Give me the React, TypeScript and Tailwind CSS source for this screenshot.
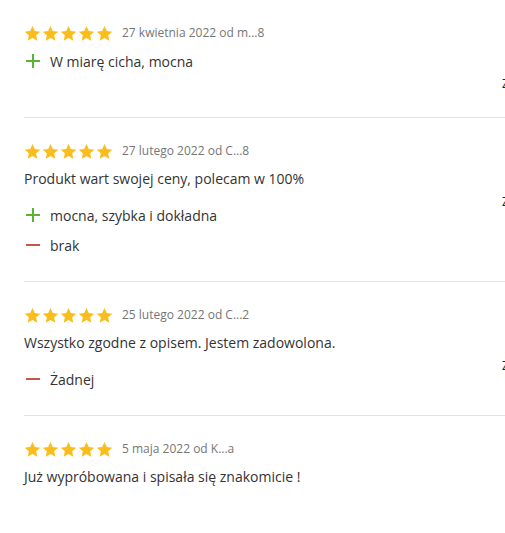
import React from "react";

type Review = {
  date: string;
  text?: string;
  pros?: string;
  cons?: string;
};

const reviews: Review[] = [
  { date: "27 kwietnia 2022 od m...8", pros: "W miarę cicha, mocna" },
  {
    date: "27 lutego 2022 od C...8",
    text: "Produkt wart swojej ceny, polecam w 100%",
    pros: "mocna, szybka i dokładna",
    cons: "brak",
  },
  {
    date: "25 lutego 2022 od C...2",
    text: "Wszystko zgodne z opisem. Jestem zadowolona.",
    cons: "Żadnej",
  },
  { date: "5 maja 2022 od K...a", text: "Już wypróbowana i spisała się znakomicie !" },
];

const Star = () => (
  <svg viewBox="0 0 24 24" className="w-[17px] h-[17px]">
    <path
      fill="#f9bd1e"
      d="M12 1.5l3.2 7.1 7.8.8-5.9 5.2 1.7 7.7L12 18.3l-6.8 4 1.7-7.7L1 9.4l7.8-.8z"
    />
  </svg>
);

const Plus = () => (
  <span className="relative w-[14px] h-[14px] shrink-0">
    <span className="absolute left-0 top-[6px] w-[14px] h-[2px] bg-[#5bb336]" />
    <span className="absolute left-[6px] top-0 w-[2px] h-[14px] bg-[#5bb336]" />
  </span>
);

const Minus = () => (
  <span className="relative w-[14px] h-[14px] shrink-0">
    <span className="absolute left-0 top-[6px] w-[14px] h-[2px] bg-[#c4544e]" />
  </span>
);

const ReviewItem = ({ review, last }: { review: Review; last: boolean }) => {
  return (
    <div
      className={
        "flex pt-[25px] pb-[26px] " + (last ? "" : "border-b border-[#e2e2e2]")
      }
    >
      <div className="flex-1 min-w-0">
        <div className="flex items-center h-4">
          <div className="flex gap-[1px]">
            <Star />
            <Star />
            <Star />
            <Star />
            <Star />
          </div>
          <span className="ml-[9px] text-[12px] text-[#767676] leading-4">
            {review.date}
          </span>
        </div>
        {review.text && (
          <p className="mt-[10px] text-[14px] leading-5 text-[#333]">{review.text}</p>
        )}
        {(review.pros || review.cons) && (
          <div
            className={
              "flex flex-col gap-[10px] " + (review.text ? "mt-4" : "mt-[10px]")
            }
          >
            {review.pros && (
              <div className="flex items-center h-5 pl-[2px] gap-[10px] text-[14px] text-[#333]">
                <Plus />
                <span>{review.pros}</span>
              </div>
            )}
            {review.cons && (
              <div className="flex items-center h-5 pl-[2px] gap-[10px] text-[14px] text-[#333]">
                <Minus />
                <span>{review.cons}</span>
              </div>
            )}
          </div>
        )}
      </div>
      {!last && (
        <div className="w-[3px] shrink-0 pt-[52px] pb-[-2px]">
          <span className="block whitespace-nowrap text-[12px] leading-[14px] text-[#222]">
            Zgłoś
          </span>
        </div>
      )}
    </div>
  );
};

export default function App() {
  return (
    <div className="w-[505px] h-[533px] overflow-hidden bg-white font-['Open_Sans',sans-serif]">
      <div className="pl-6">
        {reviews.map((r, i) => (
          <ReviewItem key={i} review={r} last={i === reviews.length - 1} />
        ))}
      </div>
    </div>
  );
}
